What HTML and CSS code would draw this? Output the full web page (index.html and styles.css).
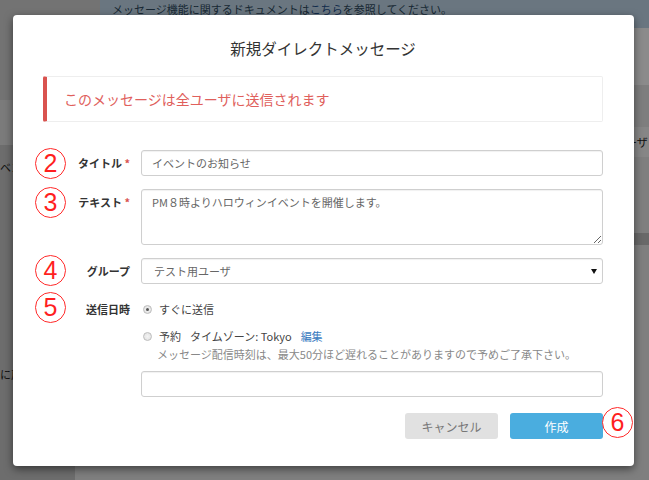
FILE: index.html
```html
<!DOCTYPE html>
<html lang="ja">
<head>
<meta charset="utf-8">
<title>新規ダイレクトメッセージ</title>
<link rel="stylesheet" href="styles.css">
</head>
<body>
<div class="page">
  <aside class="side">
    <div class="side-top"></div>
    <div class="side-band"></div>
    <div class="side-rest">
      <div class="side-text t1">ベン</div>
      <div class="side-text t2">に戻</div>
    </div>
  </aside>
  <main class="main">
    <div class="info-wrap">
      <div class="info">メッセージ機能に関するドキュメントは<a class="info-link">こちら</a>を参照してください。</div>
    </div>
    <div class="m-space"></div>
    <div class="m-head"></div>
    <div class="m-row"><span class="m-text">ーザ</span></div>
    <div class="m-row2"></div>
    <div class="m-div"></div>
    <div class="m-rest"></div>
  </main>
</div>
<div class="overlay"></div>

<div class="modal">
  <h1 class="modal-title">新規ダイレクトメッセージ</h1>
  <div class="alert">このメッセージは全ユーザに送信されます</div>
  <form class="form">
    <div class="row">
      <span class="num n2">2</span>
      <label class="lbl">タイトル <span class="req">*</span></label>
      <input class="inp" type="text" value="イベントのお知らせ">
    </div>
    <div class="row">
      <span class="num n3">3</span>
      <label class="lbl">テキスト <span class="req">*</span></label>
      <textarea class="inp area">PM８時よりハロウィンイベントを開催します。</textarea>
    </div>
    <div class="row">
      <span class="num n4">4</span>
      <label class="lbl">グループ</label>
      <div class="sel-wrap">
        <select class="inp sel"><option>テスト用ユーザ</option></select>
      </div>
    </div>
    <div class="row row-date">
      <span class="num n5">5</span>
      <label class="lbl lbl-date">送信日時</label>
      <div class="date-ctl">
        <label class="radio-line"><input class="radio" type="radio" name="when" checked> すぐに送信</label>
        <label class="radio-line line2"><input class="radio" type="radio" name="when"> 予約<span class="tz">タイムゾーン: Tokyo</span><a class="edit">編集</a></label>
        <p class="help">メッセージ配信時刻は、最大50分ほど遅れることがありますので予めご了承下さい。</p>
        <input class="inp dt" type="text" value="">
      </div>
    </div>
    <div class="actions">
      <button type="button" class="btn cancel">キャンセル</button>
      <button type="button" class="btn create">作成</button>
      <span class="num n6">6</span>
    </div>
  </form>
</div>
</body>
</html>
```

FILE: styles.css
```css
* { box-sizing: border-box; }
html, body { margin: 0; padding: 0; }
body {
  width: 649px;
  height: 480px;
  overflow: hidden;
  position: relative;
  font-family: "Noto Sans CJK JP", "Noto Sans", sans-serif;
  background: #dadada;
  color: #333;
}

/* background page */
.page { display: flex; height: 480px; }
.side { width: 75px; flex: none; display: flex; flex-direction: column; overflow: hidden; }
.side-top { height: 100px; background: #d1d1d1; }
.side-band { height: 45px; background: #e0e0e0; }
.side-rest { flex: 1; background: #c6c6c6; font-size: 11px; color: #222; }
.side-text { white-space: nowrap; line-height: 16px; }
.t1 { margin-top: 14px; }
.t2 { margin-top: 191px; }

.main { flex: 1; display: flex; flex-direction: column; }
.info-wrap { height: 28px; background: #d1d1d1; padding-left: 25px; }
.info {
  height: 28px;
  background: #c2d8ea;
  font-size: 11px;
  line-height: 19px;
  padding-left: 12px;
  color: #2e4a60;
  white-space: nowrap;
}
.info-link { color: #1f4f8a; text-decoration: underline; }
.m-space { height: 57px; background: #fdfdfd; }
.m-head { height: 42px; background: #e6e6e6; }
.m-row { height: 30px; background: #f4f4f4; font-size: 11px; line-height: 30px; color: #222; padding-left: 551px; white-space: nowrap; }
.m-row2 { height: 76px; background: #e8e8e8; }
.m-div { height: 12px; background: #c0c0c0; }
.m-rest { flex: 1; background: #e8e8e8; }

.overlay {
  position: absolute;
  inset: 0;
  background: rgba(0, 0, 0, 0.45);
}

/* modal */
.modal {
  position: absolute;
  left: 13px;
  top: 15px;
  width: 621px;
  height: 451px;
  background: #fff;
  border-radius: 4px;
  box-shadow: 0 3px 9px rgba(0, 0, 0, 0.5);
  padding: 22px 31px 0 30px;
}
.modal-title {
  margin: 0 0 17px;
  font-size: 15.5px;
  font-weight: normal;
  line-height: 22px;
  text-align: center;
  color: #333;
}
.alert {
  height: 46px;
  border: 1px solid #eeeeee;
  border-left: 4px solid #d9534f;
  border-radius: 2px;
  display: flex;
  align-items: center;
  padding-left: 17px;
  font-size: 14px;
  color: #e0605c;
}

.form { margin-top: 28px; }
.row {
  position: relative;
  display: grid;
  grid-template-columns: 87px 1fr;
  column-gap: 11px;
  margin-bottom: 13px;
}
.lbl {
  text-align: right;
  font-size: 11px;
  font-weight: bold;
  line-height: 26px;
  color: #333;
  white-space: nowrap;
}
.req { color: #d9534f; }

.inp {
  display: block;
  width: 100%;
  height: 26px;
  border: 1px solid #cfcfcf;
  border-radius: 3px;
  box-shadow: inset 0 1px 1px rgba(0, 0, 0, 0.06);
  padding: 0 10px;
  font-family: inherit;
  font-size: 11px;
  color: #666;
  background: #fff;
  outline: none;
}
.area {
  height: 56px;
  padding: 4px 10px;
  line-height: 16px;
  resize: vertical;
}
.sel-wrap { position: relative; }
.sel {
  -webkit-appearance: none;
  appearance: none;
  padding-left: 12px;
}
.sel-wrap::after {
  content: "";
  position: absolute;
  right: 6px;
  top: 11px;
  border-left: 3px solid transparent;
  border-right: 3px solid transparent;
  border-top: 5px solid #111;
  pointer-events: none;
}

.row-date { margin-top: 16px; margin-bottom: 0; }
.lbl-date { line-height: 18px; }
.date-ctl { display: flex; flex-direction: column; }
.radio-line {
  display: flex;
  align-items: center;
  height: 18px;
  font-size: 11px;
  color: #444;
  white-space: nowrap;
}
.line2 { margin-top: 9px; }
.radio {
  -webkit-appearance: none;
  appearance: none;
  width: 9px;
  height: 9px;
  margin: 0 7px 0 2px;
  border: 1px solid #bdbdbd;
  border-radius: 50%;
  background: radial-gradient(circle, #f4f4f4 0, #dedede 100%);
  position: relative;
}
.radio:checked::after {
  content: "";
  position: absolute;
  left: 2px;
  top: 2px;
  width: 3px;
  height: 3px;
  border-radius: 50%;
  background: #555;
}
.tz { margin-left: 9px; }
.edit { margin-left: 9px; color: #3a7bbf; }
.help {
  margin: 1px 0 0 16px;
  font-size: 11px;
  line-height: 16px;
  color: #888;
  white-space: nowrap;
}
.dt { margin-top: 9px; }

.actions {
  position: relative;
  display: flex;
  justify-content: flex-end;
  gap: 12px;
  margin-top: 16px;
}
.btn {
  width: 93px;
  height: 26px;
  border: none;
  border-radius: 3px;
  font-family: inherit;
  font-size: 12px;
}
.cancel { background: #e1e1e1; color: #777; }
.create { background: #4aaddf; color: #fff; }

/* annotation markers */
.num {
  position: absolute;
  width: 31px;
  height: 31px;
  border: 1.5px solid #ff2a2a;
  border-radius: 50%;
  background: #fff;
  color: #ff1f1f;
  font-family: "Liberation Sans", "DejaVu Sans", sans-serif;
  font-size: 25px;
  line-height: 28px;
  text-align: center;
}
.n2 { left: -8px; top: -2px; }
.n3 { left: -8px; top: -2px; }
.n4 { left: -8px; top: -3px; }
.n5 { left: -8px; top: -8px; }
.n6 { right: -30px; top: -6px; }
```
